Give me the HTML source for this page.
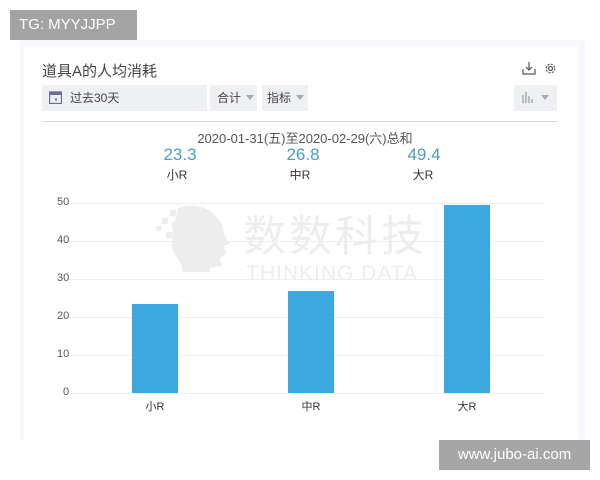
<!DOCTYPE html>
<html><head><meta charset="utf-8"><style>
*{margin:0;padding:0;box-sizing:border-box}
body{width:600px;height:480px;background:#fff;position:relative;overflow:hidden;font-family:"Liberation Sans","Noto Sans CJK SC",sans-serif;color:#333}
.a{position:absolute}
.tg{left:10px;top:10px;width:127px;height:30px;background:#a3a3a3;color:#fff;font-size:15px;line-height:30px;padding-left:9px}
.outer{left:20px;top:40px;width:565px;height:400px;background:#f6f8fb}
.card{left:24px;top:46px;width:554px;height:394px;background:#fff}
.btn{background:#eef0f4;height:26px;top:85px;font-size:12px;line-height:26px;color:#444}
.tri{display:inline-block;width:0;height:0;border-left:4px solid transparent;border-right:4px solid transparent;border-top:5px solid #aaa;margin-left:5px;vertical-align:2px}
.grid{left:68px;width:477px;height:1px;background:#eeeff2}
.yl{left:40px;width:30px;font-size:11px;color:#555;text-align:left}
.bar{background:#3ba9e0;width:46px}
.val{font-size:17px;color:#4a9cc9;width:80px;text-align:center}
.lab{font-size:12px;color:#333;width:80px;text-align:center}
</style></head><body>
<div class="a outer"></div>
<div class="a card"></div>
<div class="a tg">TG: MYYJJPP</div>
<div class="a" style="left:42px;top:60px;font-size:15px;color:#444">道具A的人均消耗</div>
<svg class="a" style="left:522px;top:61px" width="14" height="14" viewBox="0 0 14 14" fill="none" stroke="#555" stroke-width="1.2"><path d="M7 1v8M4 6l3 3 3-3M1 8v5h12V8"/></svg>
<svg class="a" style="left:544px;top:62px" width="13" height="13" viewBox="0 0 13 13" fill="none" stroke="#555" stroke-width="1.2"><circle cx="6.5" cy="6.5" r="2"/><circle cx="6.5" cy="6.5" r="4.3" stroke-dasharray="2 1.4"/></svg>
<div class="a btn" style="left:42px;width:165px;padding-left:28px">过去30天</div>
<svg class="a" style="left:49px;top:91px" width="13" height="13" viewBox="0 0 13 13"><rect x="0.5" y="1" width="12" height="11.5" fill="none" stroke="#6f6a9a" stroke-width="1.3"/><rect x="0.5" y="1" width="12" height="3" fill="#6f6a9a"/><rect x="6" y="7.5" width="2" height="2" fill="#6f6a9a"/></svg>
<div class="a btn" style="left:210px;width:47px;padding-left:7px">合计<span class="tri"></span></div>
<div class="a btn" style="left:262px;width:46px;padding-left:5px">指标<span class="tri"></span></div>
<div class="a btn" style="left:514px;width:43px;padding-left:8px;color:#999">
<svg width="14" height="12" style="vertical-align:-1px" viewBox="0 0 14 12" stroke="#999" stroke-width="1.2"><path d="M1 4v8M4 1v11M7 5v7M10 8v4"/></svg><span class="tri"></span></div>
<div class="a" style="left:42px;top:121px;width:515px;height:1px;background:#d8d8d8"></div>
<div class="a" style="left:150px;top:128px;width:310px;text-align:center;font-size:13px;color:#555">2020-01-31(五)至2020-02-29(六)总和</div>
<div class="a val" style="left:140px;top:145px">23.3</div>
<div class="a val" style="left:263px;top:145px">26.8</div>
<div class="a val" style="left:384px;top:145px">49.4</div>
<div class="a lab" style="left:137px;top:166px">小R</div>
<div class="a lab" style="left:260px;top:166px">中R</div>
<div class="a lab" style="left:383px;top:166px">大R</div>

<div class="a grid" style="top:203px"></div>
<div class="a grid" style="top:241px"></div>
<div class="a grid" style="top:279px"></div>
<div class="a grid" style="top:317px"></div>
<div class="a grid" style="top:355px"></div>
<div class="a grid" style="top:393px"></div>
<div class="a yl" style="top:196px;left:57px">50</div>
<div class="a yl" style="top:234px;left:57px">40</div>
<div class="a yl" style="top:272px;left:57px">30</div>
<div class="a yl" style="top:310px;left:57px">20</div>
<div class="a yl" style="top:348px;left:57px">10</div>
<div class="a yl" style="top:386px;left:63px">0</div>

<svg class="a" style="left:152px;top:200px" width="80" height="72" viewBox="0 0 80 72" fill="#ededed"><path d="M26 8c20-8 44 4 46 26l6 10-6 2 2 8-6 4 2 8-12 2v4H30c2-10-10-16-10-28 0-18 6-32 6-36z"/><rect x="18" y="10" width="6" height="6"/><rect x="10" y="18" width="6" height="6"/><rect x="20" y="22" width="8" height="8"/><rect x="4" y="26" width="5" height="5"/><rect x="14" y="32" width="6" height="6"/></svg>
<div class="a" style="left:243px;top:208px;font-size:43px;color:#ededed;font-family:'Noto Sans CJK SC',sans-serif;letter-spacing:3px;line-height:50px">数数科技</div>
<div class="a" style="left:246px;top:263px;font-size:21px;color:#ededed;letter-spacing:1px;line-height:21px">THINKING DATA</div>

<div class="a bar" style="left:132px;top:304px;height:89px"></div>
<div class="a bar" style="left:288px;top:291px;height:102px"></div>
<div class="a bar" style="left:444px;top:205px;height:188px"></div>
<div class="a lab" style="left:115px;top:398px;font-size:11px">小R</div>
<div class="a lab" style="left:271px;top:398px;font-size:11px">中R</div>
<div class="a lab" style="left:427px;top:398px;font-size:11px">大R</div>

<div class="a" style="left:439px;top:440px;width:151px;height:30px;background:#a6a6a6;color:#fff;font-size:15px;line-height:30px;text-align:center">www.jubo-ai.com</div>
</body></html>
